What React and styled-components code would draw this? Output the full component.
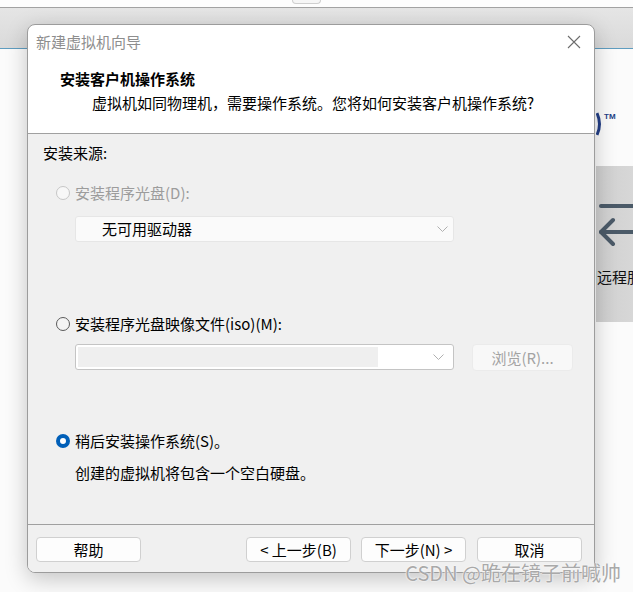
import React from 'react';
import styled, { createGlobalStyle } from 'styled-components';

const Global = createGlobalStyle`
  html, body {
    margin: 0;
    padding: 0;
    background: #fbfbfb;
    overflow: hidden;
  }
  * { box-sizing: border-box; }
`

const FONT = `"Noto Sans CJK SC", "Noto Sans", sans-serif`

const Stage = styled.div`
  position: relative;
  width: 633px;
  height: 592px;
  overflow: hidden;
  font-family: ${FONT};
  background: #fbfbfb;
`

const TopStrip = styled.div`
  height: 7px;
  background: #fdfdfd;
`

const Tab = styled.div`
  margin-left: 292px;
  width: 29px;
  height: 4px;
  border: 1px solid #cfcfcf;
  border-top: none;
  border-radius: 0 0 4px 4px;
  background: #f6f6f6;
`

const Toolbar = styled.div`
  height: 42px;
  border-top: 1px solid #a2a2a2;
  border-bottom: 1px solid #5f9dc0;
  background: linear-gradient(#e5e5e5, #dadada);
`

const Content = styled.div`
  display: flex;
  flex-direction: column;
  padding-left: 596px;
`

const Logo = styled.div`
  display: flex;
  align-items: flex-start;
  gap: 2px;
  margin-top: 63px;
  height: 24px;
  color: #233f86;
  font-family: "Liberation Sans", sans-serif;
  font-size: 8px;
  font-weight: bold;
  line-height: 10px;
`

const Tile = styled.div`
  margin-top: 30px;
  width: 120px;
  height: 156px;
  background: linear-gradient(90deg, #cfcfcf, #d7d7d7 30%, #d5d5d5);
  padding-top: 30px;
  display: flex;
  flex-direction: column;
  overflow: hidden;
`

const TileIcon = styled.svg`
  margin-left: 3px;
`

const TileLabel = styled.div`
  margin-top: 19px;
  margin-left: -14px;
  font-size: 15px;
  line-height: 20px;
  color: #111;
  white-space: nowrap;
`

const Dialog = styled.div`
  position: absolute;
  left: 27px;
  top: 24px;
  width: 568px;
  height: 549px;
  border: 1px solid #9c9c9c;
  border-radius: 8px;
  overflow: hidden;
  background: #fff;
  display: flex;
  flex-direction: column;
  box-shadow: 0 6px 22px rgba(0, 0, 0, 0.22);
`

const TitleBar = styled.div`
  height: 37px;
  display: flex;
  align-items: center;
  justify-content: space-between;
  padding: 0 13px 4px 8px;
  font-size: 15px;
  color: #8e8e8e;
`

const Header = styled.div`
  height: 71px;
  padding: 7px 0 0 32px;
  background: #fff;
`

const HeaderTitle = styled.div`
  font-size: 15px;
  font-weight: bold;
  line-height: 20px;
  color: #000;
`

const HeaderSub = styled.div`
  margin-top: 4px;
  padding-left: 32px;
  font-size: 15px;
  line-height: 20px;
  color: #000;
`

const Body = styled.div`
  height: 391px;
  border-top: 1px solid #a0a0a0;
  background: #f0f0f0;
  padding: 9px 0 0 15px;
  display: flex;
  flex-direction: column;
`

const Text = styled.div`
  font-size: 15px;
  line-height: 20px;
  color: ${p => (p.$muted ? '#9c9c9c' : '#000')};
  margin-top: ${p => p.$top || 0}px;
  padding-left: ${p => p.$indent || 0}px;
`

const RadioRow = styled.div`
  display: flex;
  align-items: center;
  gap: 5px;
  margin-top: ${p => p.$top}px;
  padding-left: 13px;
  font-size: 15px;
  line-height: 20px;
  color: ${p => (p.$disabled ? '#9c9c9c' : '#000')};
`

const RadioDot = styled.span`
  width: 14px;
  height: 14px;
  border-radius: 50%;
  flex: none;
  border: ${p => (p.$checked ? '4px solid #005fb8' : p.$disabled ? '1px solid #c6c6c6' : '1px solid #5a5a5a')};
  background: ${p => (p.$checked ? '#fff' : p.$disabled ? '#f7f7f7' : '#f4f4f4')};
`

const FieldRow = styled.div`
  display: flex;
  align-items: flex-start;
  gap: 18px;
  margin-top: ${p => p.$top}px;
  padding-left: 32px;
`

const Combo = styled.div`
  width: 379px;
  height: 26px;
  border: 1px solid ${p => (p.$empty ? '#c4c4c4' : '#e6e6e6')};
  border-radius: 3px;
  background: ${p => (p.$empty ? '#fff' : '#fafafa')};
  display: flex;
  align-items: center;
  padding: ${p => (p.$empty ? '2px 0 2px 2px' : '0 0 0 26px')};
  font-size: 15px;
  color: #000;
`

const ComboText = styled.div`
  flex: 1;
  line-height: 20px;
`

const ComboFill = styled.div`
  width: 300px;
  height: 100%;
  background: #efefef;
  margin-right: auto;
`

const Chevron = styled.svg`
  flex: none;
  margin-right: ${p => p.$right}px;
`

const BrowseButton = styled.div`
  width: 101px;
  height: 27px;
  border: 1px solid #ebebeb;
  border-radius: 4px;
  background: #f8f8f8;
  color: #a3a3a3;
  font-size: 15px;
  display: flex;
  align-items: center;
  justify-content: center;
`

const Footer = styled.div`
  flex: 1;
  border-top: 1px solid #a0a0a0;
  background: #f0f0f0;
  display: flex;
  align-items: flex-start;
  padding: 12px 11px 0 8px;
`

const Button = styled.div`
  width: 105px;
  height: 25px;
  border: 1px solid #d0d0d0;
  border-radius: 4px;
  background: #fdfdfd;
  font-size: 15px;
  color: #000;
  display: flex;
  align-items: center;
  justify-content: center;
  margin-left: ${p => p.$gap || 0}px;
`

const Watermark = styled.div`
  position: absolute;
  right: 12px;
  top: 561px;
  font-size: 20px;
  line-height: 24px;
  color: #a9a9a9;
  font-family: "Noto Sans CJK SC", sans-serif;
  text-shadow: 0 0 2px #fff, 0 0 1px #fff;
  white-space: nowrap;
`

const ChevronIcon = ({ right, color }) => (
  <Chevron $right={right} width="11" height="7" viewBox="0 0 11 7">
    <polyline points="0.5,0.5 5.5,5.5 10.5,0.5" fill="none" stroke={color} strokeWidth="1" />
  </Chevron>
)

export default function App() {
  return (
    <Stage>
      <Global />
      <TopStrip>
        <Tab />
      </TopStrip>
      <Toolbar />
      <Content>
        <Logo>
          <svg width="6" height="24" viewBox="0 0 6 24">
            <path d="M1 1 Q6 12 1 23" fill="none" stroke="#233f86" strokeWidth="3" />
          </svg>
          <span>TM</span>
        </Logo>
        <Tile>
          <TileIcon width="60" height="52" viewBox="0 0 60 52">
            <line x1="2" y1="10" x2="60" y2="10" stroke="#4b5a68" strokeWidth="4" strokeLinecap="round" />
            <line x1="2" y1="36" x2="60" y2="36" stroke="#4b5a68" strokeWidth="4" strokeLinecap="round" />
            <polyline points="14,24 2,36 14,48" fill="none" stroke="#4b5a68" strokeWidth="4" strokeLinecap="round" strokeLinejoin="round" />
          </TileIcon>
          <TileLabel>到远程服务器</TileLabel>
        </Tile>
      </Content>

      <Dialog>
        <TitleBar>
          <span>新建虚拟机向导</span>
          <svg width="14" height="14" viewBox="0 0 14 14">
            <path d="M1 1 L13 13 M13 1 L1 13" stroke="#6d6d6d" strokeWidth="1.1" />
          </svg>
        </TitleBar>
        <Header>
          <HeaderTitle>安装客户机操作系统</HeaderTitle>
          <HeaderSub>虚拟机如同物理机，需要操作系统。您将如何安装客户机操作系统?</HeaderSub>
        </Header>
        <Body>
          <Text>安装来源:</Text>
          <RadioRow $top={20} $disabled>
            <RadioDot $disabled />
            安装程序光盘(D):
          </RadioRow>
          <FieldRow $top={13}>
            <Combo>
              <ComboText>无可用驱动器</ComboText>
              <ChevronIcon right={5} color="#b0b0b0" />
            </Combo>
          </FieldRow>
          <RadioRow $top={72}>
            <RadioDot />
            安装程序光盘映像文件(iso)(M):
          </RadioRow>
          <FieldRow $top={10}>
            <Combo $empty>
              <ComboFill />
              <ChevronIcon right={9} color="#b0b0b0" />
            </Combo>
            <BrowseButton>浏览(R)...</BrowseButton>
          </FieldRow>
          <RadioRow $top={60}>
            <RadioDot $checked />
            稍后安装操作系统(S)。
          </RadioRow>
          <Text $top={12} $indent={32}>创建的虚拟机将包含一个空白硬盘。</Text>
        </Body>
        <Footer>
          <Button>帮助</Button>
          <Button $gap={105}>&lt; 上一步(B)</Button>
          <Button $gap={10}>下一步(N) &gt;</Button>
          <Button $gap={11}>取消</Button>
        </Footer>
      </Dialog>

      <Watermark>CSDN @跪在镜子前喊帅</Watermark>
    </Stage>
  );
}
